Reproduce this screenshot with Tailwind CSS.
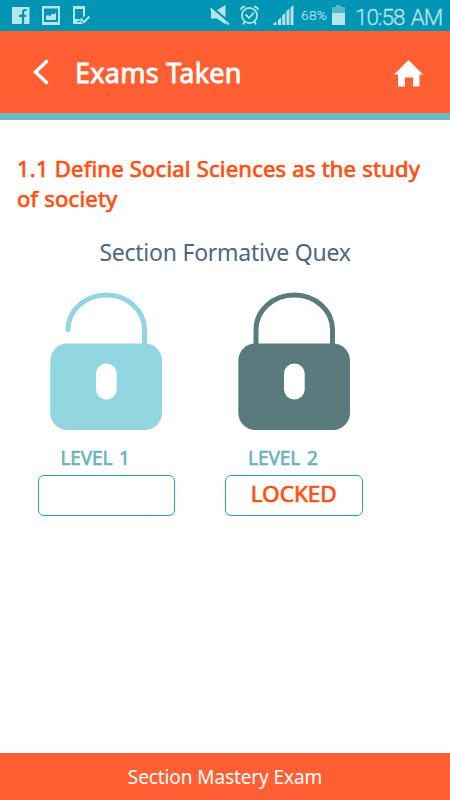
<!DOCTYPE html>
<html lang="en">
<head>
  <meta charset="UTF-8">
  <title>Exams Taken</title>
  <script src="https://cdn.jsdelivr.net/npm/@tailwindcss/browser@4"></script>
</head>
<body class="bg-white font-['Noto_Sans','Open_Sans',sans-serif]">
  <div class="w-[450px] h-[800px] flex flex-col overflow-hidden">

    <!-- Status bar -->
    <div class="h-[31px] shrink-0 bg-[#0095b3] flex items-center text-[#b5e4eb]">
      <svg class="w-[200px] h-[31px] shrink-0" viewBox="0 0 200 31" fill="currentColor">
        <path d="M12 7h17.500v17H12z"/>
        <path d="M26.500 10h-1.300q-2.200 0-2.200 2.500V24M19 15.800h7" fill="none" stroke="#0095b3" stroke-width="2.200"/>
        <path fill-rule="evenodd" d="M42 6h18v19H42zM44 8.500v13.500h14v-13.500z"/>
        <path d="M46 20v-4l2-1 2 1.500 2-3 2 1 2-2V20z"/>
        <path fill-rule="evenodd" d="M73 6h12v9.500l-2 2.500V9h-8v10h4l4 5H73z"/>
        <path d="M80.500 18.500l3.500 3.500 5.500-5.500" fill="none" stroke="currentColor" stroke-width="2"/>
        <path d="M77 21.500h3" stroke="#0095b3"/>
      </svg>
      <svg class="w-[101px] h-[31px] shrink-0" viewBox="200 0 101 31" fill="currentColor">
        <path d="M211 10h6l8.500-5v19.500l-8.500-6h-6z"/>
        <path d="M211 7l18 15.500" stroke="#0095b3" stroke-width="3"/>
        <path d="M210.500 8.500l18.500 16" stroke="currentColor" stroke-width="2"/>
        <g fill="none" stroke="currentColor" stroke-width="1.800">
          <circle cx="249.500" cy="15.500" r="7.600"/>
          <path d="M245.500 14.500l3.500 3.500 5-5.500M241 10q0-3 4-3.500M258 10q0-3-4-3.500M244.500 22l-1.500 2.500M254.500 22l1.500 2.500"/>
        </g>
        <path d="M273.500 25v-1.500l3-2V25zM278 25v-5l3-2.500V25zM282.200 25v-9.500l3-2.500V25zM286.400 25V11l3-2.500V25zM290.500 25V7.500l3-2.500V25z"/>
      </svg>
      <span class="w-[31px] shrink-0 mt-px text-[13.500px] leading-none tracking-[0.4px] whitespace-nowrap font-light font-['Roboto',sans-serif] [-webkit-text-stroke:0.2px_currentColor]">68%</span>
      <svg class="w-[13px] h-[31px] shrink-0" viewBox="332 0 13 31" fill="currentColor">
        <path opacity=".45" d="M332 7h4V5h5v2h4v6h-13z"/>
        <path d="M332 13h13v12h-13z"/>
      </svg>
      <span class="ml-[10px] mt-[3px] text-[22.500px] leading-none tracking-[-1.050px] [word-spacing:2px] font-light whitespace-nowrap font-['Roboto',sans-serif] [-webkit-text-stroke:0.3px_currentColor]">10:58 AM</span>
    </div>

    <!-- Header -->
    <header class="h-[89px] shrink-0 bg-[#ff5f33] border-b-[7px] border-[#6fb7c1] flex items-center text-white">
      <svg class="ml-[32px] w-[18px] h-[28px]" viewBox="0 0 18 28" fill="none" stroke="currentColor" stroke-width="3.500">
        <path d="M15.500 2.500L3.500 14l12 11.500"/>
      </svg>
      <h1 class="ml-[25px] flex-1 text-[27px] leading-none tracking-[0.250px] [-webkit-text-stroke:0.8px_currentColor]">Exams Taken</h1>
      <svg class="mr-[27px] mt-[3px] w-[29px] h-[27px]" viewBox="0 0 29 27" fill="currentColor">
        <path d="M14.500 0L29 14.500h-3.500V26.500h-6.500V17.500h-8v9H4v-12H0z"/>
      </svg>
    </header>

    <main class="flex-1">
      <h2 class="mt-[33px] ml-[17px] w-[425px] text-[22px] leading-[30px] tracking-[0.230px] text-[#ff4f12] [-webkit-text-stroke:0.7px_currentColor]">1.1 Define Social Sciences as the study<br>of society</h2>
      <p class="mt-[23px] text-center text-[23px] leading-[32px] tracking-[-0.240px] text-[#4f6683]">Section Formative Quex</p>

      <div class="mt-[22px] ml-[37.500px] flex gap-[50px]">
        <div class="w-[137.500px]">
          <svg class="ml-[12.500px] w-[113px] h-[140px]" viewBox="0 0 113 140">
            <path d="M18 39.500A38.200 34.500 0 0 1 94.500 39.500V56" fill="none" stroke="#92d6e2" stroke-width="5" stroke-linecap="round"/>
            <rect x=".3" y="53.500" width="111.700" height="86.500" rx="17" fill="#92d6e2"/>
            <rect x="46" y="73.500" width="20.700" height="36" rx="10.300" fill="#fff"/>
          </svg>
          <div class="mt-[14px] ml-[23px] text-[19px] leading-[28px] tracking-[-0.150px] [word-spacing:2px] text-[#69b3bd] [-webkit-text-stroke:0.6px_currentColor]">LEVEL 1</div>
          <div class="mt-[3px] h-[41px] rounded-[6px] border border-[#27a2b3]"></div>
        </div>
        <div class="w-[137.500px]">
          <svg class="ml-[12.500px] w-[113px] h-[140px]" viewBox="0 0 113 140">
            <path d="M18 56V39.500A38.200 34.500 0 0 1 94.500 39.500V56" fill="none" stroke="#597b7d" stroke-width="5"/>
            <rect x=".3" y="53.500" width="111.700" height="86.500" rx="17" fill="#597b7d"/>
            <rect x="46" y="73.500" width="20.700" height="36" rx="10.300" fill="#fff"/>
          </svg>
          <div class="mt-[14px] ml-[23px] text-[19px] leading-[28px] tracking-[-0.050px] [word-spacing:2px] text-[#69b3bd] [-webkit-text-stroke:0.6px_currentColor]">LEVEL 2</div>
          <div class="mt-[3px] h-[41px] pb-[2px] rounded-[6px] border border-[#27a2b3] flex justify-center items-center text-[22.500px] leading-none text-[#ff4f12] [-webkit-text-stroke:0.7px_currentColor]">LOCKED</div>
        </div>
      </div>
    </main>

    <footer class="h-[47px] pt-[2px] shrink-0 bg-[#ff5f33] flex items-center justify-center text-[19px] tracking-[-0.100px] text-white">Section Mastery Exam</footer>
  </div>
</body>
</html>
